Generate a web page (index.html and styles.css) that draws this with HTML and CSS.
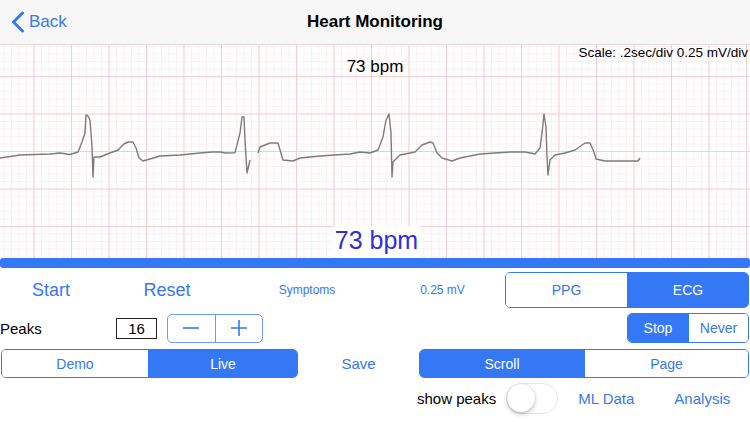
FILE: index.html
```html
<!DOCTYPE html>
<html lang="en">
<head>
    <meta charset="UTF-8">
    <meta name="viewport" content="width=device-width, initial-scale=1.0">
    <title>Heart Monitoring</title>
    <link rel="stylesheet" href="styles.css">
</head>
<body>
    <!-- Barra de navegação -->
    <header class="nav">
        <a class="back" href="#">
            <svg class="back-icon" width="14" height="22" viewBox="0 0 14 22">
                <path d="M11.5 2 L2.5 11 L11.5 20" />
            </svg>
            Back
        </a>
        <h1 class="title">Heart Monitoring</h1>
        <span></span>
    </header>

    <!-- Gráfico ECG -->
    <section class="chart">
        <div class="scale">Scale: .2sec/div 0.25 mV/div</div>
        <div class="rate-top">73 bpm</div>
        <svg class="trace" viewBox="0 45 750 213" preserveAspectRatio="none">
            <polyline points="0,158 20,155 50,154 60,153 70,154.5 78,152 82,142 85,133 86,115 88,116 90,120 92,147 93,177 94,157 100,157 110,153 118,150 124,144 128,142 133,142 136,148 139,158 143,161 150,159 160,156 180,155 200,153 212,152 220,152 225,153 235,152.7 240,133 242,117 244,117 245,140 247,173 250,160" />
            <polyline points="258,153 260,147 270,143 278,143 283,160 293,161 300,158 320,156 350,154 360,152 370,153 378,150 383,137 386,120 389,114 391,133 392,177 393,162 400,155 415,152 420,147 422,145 430,142 433,143 437,153 442,158 452,161 460,158 480,154 510,152 525,152 535,154 540,148 542,133 544,114 546,127 547,157 548,175 550,160 555,155 565,153 575,150 585,143 590,143 594,152 596,159 605,161 638,161 640,158" />
        </svg>
        <div class="rate-big">73 bpm</div>
    </section>

    <div class="progress"></div>

    <!-- Controles -->
    <div class="controls">
        <div class="row row-main">
            <a class="link link-big w-start">Start</a>
            <a class="link link-big w-reset">Reset</a>
            <a class="link link-small w-symptoms">Symptoms</a>
            <span class="link link-small w-mv">0.25 mV</span>
            <div class="segmented seg-signal">
                <span class="seg">PPG</span>
                <span class="seg seg-on">ECG</span>
            </div>
        </div>

        <div class="row row-peaks">
            <span class="label w-peaks">Peaks</span>
            <span class="count">16</span>
            <div class="stepper">
                <span class="step">
                    <svg width="20" height="20" viewBox="0 0 20 20"><path d="M2 10 H18" /></svg>
                </span>
                <span class="step">
                    <svg width="20" height="20" viewBox="0 0 20 20"><path d="M2 10 H18 M10 2 V18" /></svg>
                </span>
            </div>
            <div class="spacer"></div>
            <div class="segmented seg-stop">
                <span class="seg seg-on">Stop</span>
                <span class="seg">Never</span>
            </div>
        </div>

        <div class="row row-mode">
            <div class="segmented seg-source">
                <span class="seg">Demo</span>
                <span class="seg seg-on">Live</span>
            </div>
            <a class="link link-mid w-save">Save</a>
            <div class="segmented seg-view">
                <span class="seg seg-on">Scroll</span>
                <span class="seg">Page</span>
            </div>
        </div>

        <div class="row row-extra">
            <span class="label">show peaks</span>
            <span class="toggle"><span class="knob"></span></span>
            <a class="link link-mid ml">ML Data</a>
            <a class="link link-mid analysis">Analysis</a>
        </div>
    </div>
</body>
</html>
```

FILE: styles.css
```css
body {
    margin: 0;
    width: 750px;
    height: 422px;
    overflow: hidden;
    background: #fff;
    font-family: 'Liberation Sans', Arial, sans-serif;
    color: #000;
}

a {
    text-decoration: none;
}

/* Navegação */
.nav {
    height: 44px;
    display: grid;
    grid-template-columns: 1fr auto 1fr;
    align-items: center;
    background: #f7f7f7;
    border-bottom: 1px solid #dcdcdc;
}

.back {
    display: flex;
    align-items: center;
    gap: 4px;
    padding-left: 11px;
    color: #3478f6;
    font-size: 17px;
}

.back-icon path {
    fill: none;
    stroke: #3478f6;
    stroke-width: 3;
    stroke-linecap: round;
    stroke-linejoin: round;
}

.title {
    margin: 0;
    font-size: 17px;
    font-weight: bold;
}

/* Gráfico */
.chart {
    position: relative;
    height: 213px;
    background-color: #fff;
    background-image:
        linear-gradient(to right, #f7cdd2 1px, transparent 1px),
        linear-gradient(to bottom, #f7cdd2 1px, transparent 1px),
        linear-gradient(to right, #fdeef0 1px, transparent 1px),
        linear-gradient(to bottom, #fdeef0 1px, transparent 1px);
    background-size: 37.5px 37.5px, 37.5px 37.5px, 7.5px 7.5px, 7.5px 7.5px;
    background-position: 33.5px 0, 0 31px, 3.5px 0, 0 1px;
}

.trace {
    position: absolute;
    top: 0;
    left: 0;
    width: 750px;
    height: 213px;
}

.trace polyline {
    fill: none;
    stroke: #7c7c7c;
    stroke-width: 1.4;
    stroke-linejoin: round;
}

.scale {
    position: absolute;
    top: 0;
    right: 2px;
    font-size: 13.5px;
    line-height: 16px;
}

.rate-top {
    position: absolute;
    top: 12px;
    left: 0;
    right: 0;
    text-align: center;
    font-size: 17px;
}

.rate-big {
    position: absolute;
    bottom: 0;
    left: 333px;
    width: 87px;
    height: 32px;
    line-height: 28px;
    text-align: center;
    background: #fff;
    color: #2e2edb;
    font-size: 25px;
}

.progress {
    height: 10px;
    background: #3478f6;
    border-radius: 3px;
}

/* Controles */
.row {
    display: flex;
    align-items: center;
}

.row-main {
    height: 36px;
    margin-top: 4px;
}

.row-peaks {
    height: 30px;
    margin-top: 5px;
}

.row-mode {
    height: 29px;
    margin-top: 6px;
}

.row-extra {
    height: 30px;
    margin-top: 5px;
    padding-left: 417px;
}

.link {
    color: #3478f6;
    text-align: center;
}

.link-big {
    font-size: 18px;
}

.link-mid {
    font-size: 15px;
}

.link-small {
    font-size: 12px;
}

.w-start { width: 102px; }
.w-reset { width: 130px; }
.w-symptoms { width: 150px; }
.w-mv { width: 121px; }
.w-save { width: 121px; }

.label {
    font-size: 15px;
}

.w-peaks {
    width: 116px;
}

.count {
    width: 39px;
    height: 19px;
    border: 1px solid #222;
    font-size: 15px;
    line-height: 19px;
    text-align: center;
}

.stepper {
    display: flex;
    width: 94px;
    height: 27px;
    margin-left: 10px;
    border: 1px solid #6f9cf0;
    border-radius: 5px;
}

.step {
    flex: 1;
    display: flex;
    align-items: center;
    justify-content: center;
}

.step + .step {
    border-left: 1px solid #6f9cf0;
}

.step path {
    stroke: #3478f6;
    stroke-width: 1.6;
    fill: none;
}

.spacer {
    flex: 1;
}

/* Controles segmentados */
.segmented {
    display: flex;
    box-sizing: border-box;
    border: 1px solid #3478f6;
    border-radius: 5px;
    overflow: hidden;
    font-size: 14px;
}

.seg {
    flex: 1;
    display: flex;
    align-items: center;
    justify-content: center;
    color: #3478f6;
    background: #fff;
}

.seg + .seg {
    border-left: 1px solid #3478f6;
}

.seg-on {
    color: #fff;
    background: #3478f6;
}

.seg-signal {
    width: 244px;
    height: 36px;
    margin-left: 2px;
}

.seg-signal .seg:first-child {
    flex: 0 0 121px;
}

.seg-stop {
    width: 122px;
    height: 30px;
    margin-right: 1px;
}

.seg-stop .seg:first-child {
    flex: 0 0 60px;
}

.seg-source {
    width: 297px;
    height: 29px;
    margin-left: 1px;
}

.seg-source .seg:first-child {
    flex: 0 0 146px;
}

.seg-view {
    width: 330px;
    height: 29px;
}

.seg-view .seg:first-child {
    flex: 0 0 164px;
}

/* Toggle */
.toggle {
    position: relative;
    box-sizing: border-box;
    width: 52px;
    height: 31px;
    margin-left: 10px;
    border: 1.5px solid #e6e6e6;
    border-radius: 16px;
    background: #fff;
}

.knob {
    position: absolute;
    top: 0;
    left: 0;
    width: 28px;
    height: 28px;
    border-radius: 50%;
    background: #fff;
    box-shadow: 0 2px 4px rgba(0, 0, 0, 0.25), 0 0 1px rgba(0, 0, 0, 0.2);
}

.ml {
    margin-left: 20px;
}

.analysis {
    margin-left: 40px;
}
```
